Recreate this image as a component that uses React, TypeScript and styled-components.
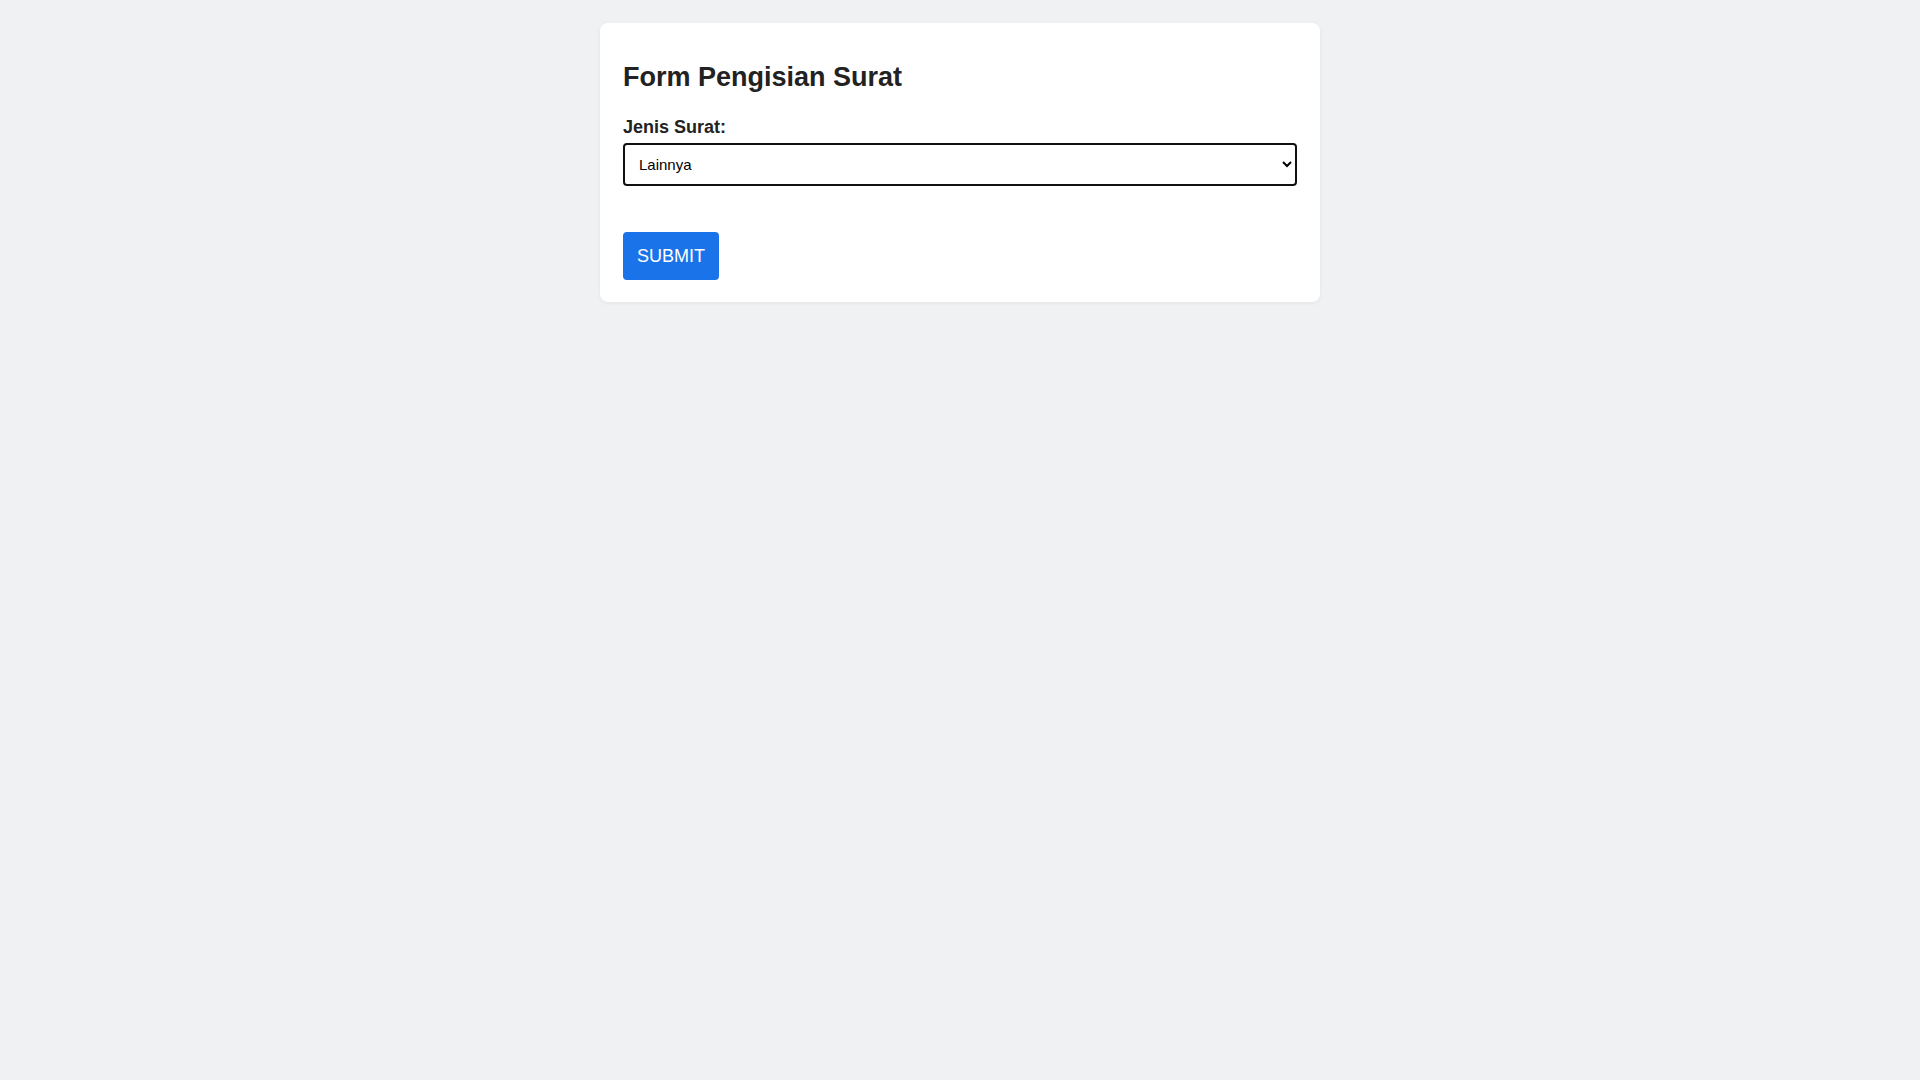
import React from "react";
import styled, { createGlobalStyle } from "styled-components";

const GlobalStyle = createGlobalStyle`
  html, body {
    margin: 0;
    padding: 0;
    background: #f0f1f3;
    font-family: "Liberation Sans", Arial, sans-serif;
  }
`;

const Page = styled.div`
  min-height: 1080px;
  padding-top: 23px;
  box-sizing: border-box;
`;

const Card = styled.div`
  width: 720px;
  margin: 0 auto;
  box-sizing: border-box;
  background: #ffffff;
  border-radius: 8px;
  box-shadow: 0 1px 4px rgba(0, 0, 0, 0.06);
  padding: 24px 24px 22px 23px;
`;

const Title = styled.h2`
  margin: 15px 0 24px;
  font-size: 27px;
  font-weight: 700;
  color: #222222;
  line-height: 31px;
`;

const Field = styled.div`
  display: flex;
  flex-direction: column;
  gap: 6px;
  margin-bottom: 46px;
`;

const Label = styled.label`
  font-size: 18px;
  font-weight: 700;
  color: #222222;
  line-height: 20px;
`;

const Select = styled.select`
  width: 674px;
  height: 43px;
  box-sizing: border-box;
  border: 2px solid #111111;
  border-radius: 4px;
  padding: 0 8px 0 10px;
  font-family: "Liberation Sans", Arial, sans-serif;
  font-size: 15px;
  color: #000000;
  background: #ffffff;
  outline: none;
`;

const Button = styled.button`
  display: block;
  height: 48px;
  padding: 0 14px;
  border: none;
  border-radius: 4px;
  background: #1a73e8;
  color: #ffffff;
  font-family: "Liberation Sans", Arial, sans-serif;
  font-size: 18px;
  cursor: pointer;
`;

export default function App() {
  return (
    <>
      <GlobalStyle />
      <Page>
        <Card>
          <Title>Form Pengisian Surat</Title>
          <Field>
            <Label htmlFor="jenis">Jenis Surat:</Label>
            <Select id="jenis" defaultValue="lainnya">
              <option value="undangan">Undangan</option>
              <option value="pemberitahuan">Pemberitahuan</option>
              <option value="lainnya">Lainnya</option>
            </Select>
          </Field>
          <Button type="submit">SUBMIT</Button>
        </Card>
      </Page>
    </>
  );
}
